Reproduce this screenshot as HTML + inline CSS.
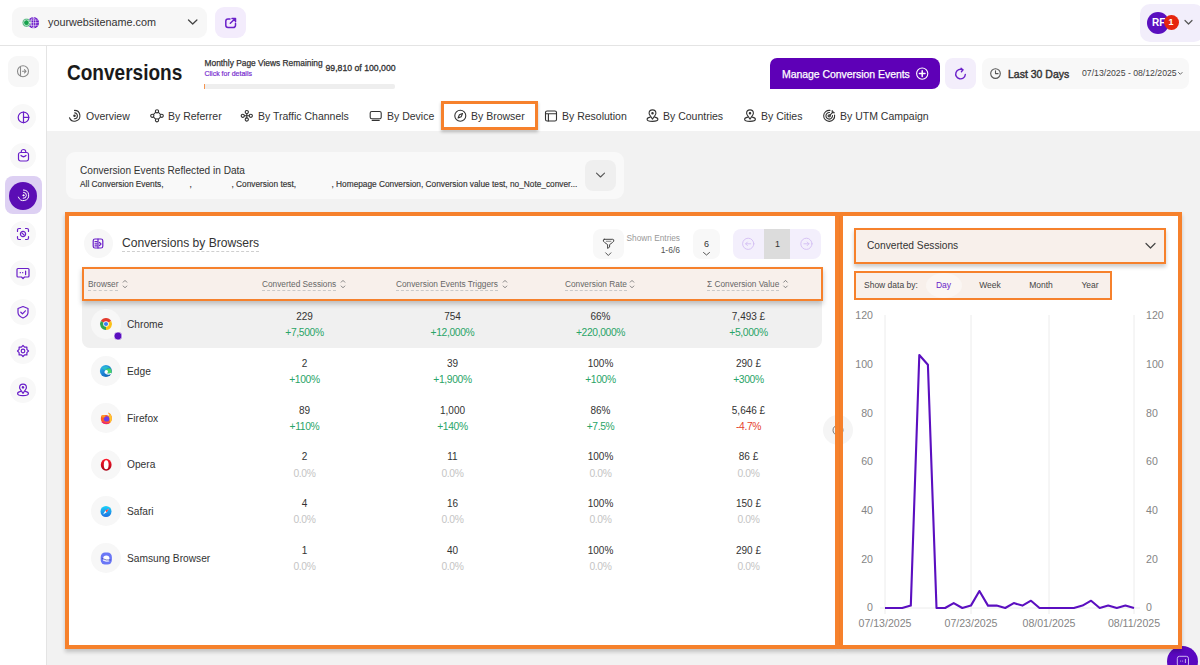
<!DOCTYPE html>
<html><head><meta charset="utf-8">
<style>
*{box-sizing:border-box;margin:0;padding:0}
html,body{width:1200px;height:665px;overflow:hidden;background:#f2f2f2;font-family:"Liberation Sans",sans-serif;color:#222}
.a{position:absolute}
.t{position:absolute;white-space:nowrap;line-height:1}
.c{transform:translateX(-50%)}
.r{transform:translateX(-100%)}
svg{position:absolute;overflow:visible}
#top{left:0;top:0;width:1200px;height:46px;background:#fff;border-bottom:1px solid #e4e4e4}
#side{left:0;top:46px;width:47px;height:619px;background:#fff;border-right:1px solid #e4e4e4}
#hdr{left:47px;top:46px;width:1153px;height:85px;background:#fff}
.sb{position:absolute;left:10px;width:26px;height:26px;border-radius:50%;background:#f7f7f7}
.tab{font-size:10.5px;color:#333;top:110.5px}
.th{font-size:8.3px;color:#666;top:280px;border-bottom:1px dashed #c9c9c9;padding-bottom:2px}
.num{font-size:10px;color:#333;margin-top:0.3px}
.chg{font-size:10.3px;color:#29a467;letter-spacing:-0.35px;margin-top:1px}
.zero{font-size:10.3px;color:#c4c4c4;letter-spacing:-0.35px;margin-top:1px}
.neg{font-size:10.3px;color:#e5432a;letter-spacing:-0.35px;margin-top:1px}
.bic{position:absolute;left:91px;width:30px;height:30px;border-radius:50%;background:#f7f7f7}
.bn{font-size:10.2px;color:#333;left:127px}
.ax{font-size:10.6px;color:#858585}
</style></head><body>
<div id="top" class="a"></div>
<div id="side" class="a"></div>
<div id="hdr" class="a"></div>
<!-- SIDEBAR -->
<div class="a" style="left:8px;top:56px;width:31px;height:31px;background:#f7f7f7;border-radius:9px"></div>
<div class="a" style="left:10px;top:104px;width:26px;height:26px;border-radius:50%;background:#f8f8f8"></div>
<div class="a" style="left:10px;top:143px;width:26px;height:26px;border-radius:50%;background:#f8f8f8"></div>
<div class="a" style="left:10px;top:221px;width:26px;height:26px;border-radius:50%;background:#f8f8f8"></div>
<div class="a" style="left:10px;top:260px;width:26px;height:26px;border-radius:50%;background:#f8f8f8"></div>
<div class="a" style="left:10px;top:299px;width:26px;height:26px;border-radius:50%;background:#f8f8f8"></div>
<div class="a" style="left:10px;top:338px;width:26px;height:26px;border-radius:50%;background:#f8f8f8"></div>
<div class="a" style="left:10px;top:377px;width:26px;height:26px;border-radius:50%;background:#f8f8f8"></div>
<div class="a" style="left:4.5px;top:176px;width:37px;height:38px;background:#ddd0f3;border-radius:8px"></div>
<div class="a" style="left:9px;top:181.5px;width:28px;height:28px;border-radius:50%;background:#5b0db5"></div>
<svg style="left:0;top:0" width="1200" height="665" fill="none" stroke-linecap="round" stroke-linejoin="round">
<g transform="translate(23,71.3)" stroke="#8a8a8a" stroke-width="1.1"><circle r="5.5"/><line x1="-2.5" y1="-4.5" x2="-2.5" y2="4.5"/><path d="M-0.5 0H3M1.5 -1.6L3 0L1.5 1.6"/></g>
<g transform="translate(23.5,117.4)" stroke="#6a1fc9" stroke-width="1.2"><circle r="5.3"/><line x1="0" y1="-5.3" x2="0" y2="5.3"/><line x1="0" y1="0" x2="5.3" y2="0"/></g>
<g transform="translate(23.5,156)" stroke="#6a1fc9" stroke-width="1.2"><rect x="-5" y="-3.5" width="10" height="8.5" rx="2"/><path d="M-2.2 -3.5V-4.5a2.2 2 0 0 1 4.4 0V-3.5"/><path d="M-2.5 -0.5Q0 2 2.5 -0.5"/></g>
<g transform="translate(23.4,195.3)" stroke="#fff" stroke-width="1"><path d="M0 -5.3A5.3 5.3 0 1 1 -5 1.8"/><path d="M0.2 -3A3 3 0 0 1 -0.2 3"/><circle r="0.6" fill="#fff"/></g>
<g transform="translate(23,234)" stroke="#6a1fc9" stroke-width="1.2"><path d="M-5.5 -2.5V-4a1.5 1.5 0 0 1 1.5 -1.5H-2.5M2.5 -5.5H4a1.5 1.5 0 0 1 1.5 1.5V-2.5M5.5 2.5V4a1.5 1.5 0 0 1 -1.5 1.5H2.5M-2.5 5.5H-4a1.5 1.5 0 0 1 -1.5 -1.5V2.5"/><circle r="2.6"/><line x1="-1.2" y1="-1.2" x2="1.2" y2="1.2"/></g>
<g transform="translate(23,273)" stroke="#6a1fc9" stroke-width="1.2"><path d="M-5 -4.5H5a1 1 0 0 1 1 1V3a1 1 0 0 1 -1 1H1.5L0 5.5L-1.5 4H-5a1 1 0 0 1 -1 -1V-3.5a1 1 0 0 1 1 -1Z"/><line x1="-2.8" y1="-0.3" x2="-2.6" y2="-0.3"/><line x1="-0.4" y1="-0.3" x2="-0.2" y2="-0.3"/><line x1="2.6" y1="-2" x2="2.6" y2="1.6"/></g>
<g transform="translate(23,312)" stroke="#6a1fc9" stroke-width="1.2"><path d="M0 -5.5L5 -3.5V0.5Q5 4 0 6Q-5 4 -5 0.5V-3.5Z"/><path d="M-2.2 0.2L-0.5 1.8L2.4 -1.2"/></g>
<g transform="translate(23,351)" stroke="#6a1fc9" stroke-width="1.2"><path d="M5.50 0.00L3.88 1.61L3.89 3.89L1.61 3.88L0.00 5.50L-1.61 3.88L-3.89 3.89L-3.88 1.61L-5.50 0.00L-3.88 -1.61L-3.89 -3.89L-1.61 -3.88L-0.00 -5.50L1.61 -3.88L3.89 -3.89L3.88 -1.61Z"/><circle r="1.8"/></g>
<g transform="translate(23,390)" stroke="#6a1fc9" stroke-width="1.2"><path d="M0 3.3L-2.6 -0.5Q-3.4 -1.6 -3.4 -2.5A3.4 3.4 0 0 1 3.4 -2.5Q3.4 -1.6 2.6 -0.5Z"/><circle cy="-2.6" r="0.7" fill="#6a1fc9"/><path d="M-2.3 1.3Q-5.4 2 -5.4 3.5Q-5.4 5.6 0 5.6Q5.4 5.6 5.4 3.5Q5.4 2 2.3 1.3"/></g>
</svg>

<!-- site selector -->
<div class="a" style="left:12px;top:7px;width:195px;height:31px;background:#f7f7f7;border-radius:9px"></div>
<div class="t" style="left:48px;top:17px;font-size:10.8px;color:#333">yourwebsitename.com</div>
<div class="a" style="left:215px;top:7px;width:31px;height:31px;background:#f3ecfc;border-radius:9px"></div>

<!-- avatar -->
<div class="a" style="left:1140px;top:4px;width:64px;height:38px;background:#f2eefb;border-radius:10px"></div>
<div class="a" style="left:1147px;top:12px;width:22px;height:22px;border-radius:50%;background:#5a0fbf"></div>
<div class="t" style="left:1152px;top:18px;font-size:10px;color:#fff;font-weight:bold">RF</div>
<div class="a" style="left:1164px;top:15px;width:15px;height:15px;border-radius:50%;background:#e6260f"></div>
<div class="t" style="left:1168.5px;top:18px;font-size:9px;color:#fff;font-weight:bold">1</div>

<!-- title -->
<div class="t" style="left:67px;top:62px;font-size:22px;font-weight:bold;color:#1a1a1a;transform:scaleX(0.865);transform-origin:0 0">Conversions</div>
<div class="t" style="left:204.5px;top:58.5px;font-size:8.4px;color:#333;-webkit-text-stroke:0.25px #333">Monthly Page Views Remaining</div>
<div class="t" style="left:204.5px;top:70px;font-size:7px;color:#7a2fd0;-webkit-text-stroke:0.2px #7a2fd0">Click for details</div>
<div class="t" style="left:325.5px;top:63.5px;font-size:8.7px;color:#333;-webkit-text-stroke:0.3px #333">99,810 of 100,000</div>
<div class="a" style="left:204px;top:84px;width:191px;height:5px;background:#eeeeee;border-radius:2px"></div>
<div class="a" style="left:204px;top:84px;width:1px;height:5px;background:#f6954f"></div>

<!-- manage button etc -->
<div class="a" style="left:770px;top:58px;width:170px;height:31px;background:#5e00b7;border-radius:7px 8px 8px 0"></div>
<div class="t" style="left:782px;top:68.5px;font-size:10.5px;color:#fff;-webkit-text-stroke:0.25px #fff;letter-spacing:-0.05px">Manage Conversion Events</div>
<div class="a" style="left:945px;top:58px;width:31px;height:31px;background:#f3eefb;border-radius:8px"></div>
<div class="a" style="left:982px;top:58px;width:207px;height:31px;background:#f8f8f8;border-radius:8px"></div>
<div class="t" style="left:1008px;top:68.5px;font-size:10.5px;color:#333;-webkit-text-stroke:0.4px #333">Last 30 Days</div>
<div class="t" style="left:1082px;top:69px;font-size:8.7px;color:#444">07/13/2025 - 08/12/2025</div>

<!-- TOP ICONS -->
<svg style="left:0;top:0" width="1200" height="665" fill="none" stroke-linecap="round" stroke-linejoin="round">
<g transform="translate(33.5,22.7)"><circle r="5.6" fill="#6a16c8"/><g stroke="#fff" stroke-width="0.6" opacity="0.9"><ellipse rx="2.3" ry="5.2"/><line x1="-5.2" y1="0" x2="5.2" y2="0"/><line x1="-4.6" y1="-2.6" x2="4.6" y2="-2.6"/><line x1="-4.6" y1="2.6" x2="4.6" y2="2.6"/><line x1="0" y1="-5.4" x2="0" y2="5.4"/></g></g>
<g transform="translate(26.5,22.7)"><circle r="4.2" fill="#27a35d" stroke="#fff" stroke-width="0.5"/><circle r="2.9" fill="none" stroke="#fff" stroke-width="0.7"/><circle r="1.9" fill="#15a34a"/></g>
<path d="M188.5 20L192.7 24L196.9 20" stroke="#444" stroke-width="1.3"/>
<g stroke="#6a1fc9" stroke-width="1.5"><path d="M230 19H228a2.2 2.2 0 0 0 -2.2 2.2V25.3a2.2 2.2 0 0 0 2.2 2.2H233.3a2.2 2.2 0 0 0 2.2 -2.2V23.5"/><path d="M230.3 23.3L235.3 18.5M232 18.4H235.5V21.8"/></g>
<path d="M1185 20.5L1188.5 24L1192 20.5" stroke="#555" stroke-width="1.2"/>
<g transform="translate(922.2,73.6)" stroke="#fff" stroke-width="1.1"><circle r="5.6"/><path d="M-2.8 0H2.8M0 -2.8V2.8" stroke-width="1.5"/></g>
<g transform="translate(960.5,74)" stroke="#6a1fc9" stroke-width="1.4"><path d="M2.2 -4.2A4.8 4.8 0 1 0 4.8 0.5"/><path d="M0.6 -5.8L2.6 -4.1L0.9 -2.2" stroke-width="1.3"/></g>
<g transform="translate(995.5,73.6)" stroke="#555" stroke-width="1.1"><circle r="4.8"/><path d="M0 -2.8V0H2.6"/></g>
<path d="M1178.5 72.5L1180.3 74.3L1182.1 72.5" stroke="#555" stroke-width="0.9"/>
</svg>
<!-- TAB ICONS -->
<svg style="left:0;top:0" width="1200" height="665" fill="none" stroke-linecap="round" stroke-linejoin="round">
<g transform="translate(74.5,115.8)" stroke="#333" stroke-width="1.1"><path d="M0 -5.4A5.4 5.4 0 1 1 -5 2"/><path d="M0.2 -2.9A2.9 2.9 0 0 1 -0.2 2.9"/><circle r="0.7" fill="#333"/></g>
<g transform="translate(157,115.8)" stroke="#333" stroke-width="1.1"><path d="M-1.4 -3.4L-3.4 -1.4M1.4 -3.4L3.4 -1.4M-1.4 3.4L-3.4 1.4M1.4 3.4L3.4 1.4"/><circle cy="-4.5" r="1.6"/><circle cy="4.5" r="1.6"/><circle cx="-4.7" r="1.6"/><circle cx="4.7" r="1.6"/></g>
<g transform="translate(246.8,115.8)" stroke="#333" stroke-width="1.1"><circle cy="-3.7" r="1.6"/><circle cy="3.7" r="1.6"/><circle cx="-4" r="1.6"/><circle cx="4" r="1.6"/><path d="M-2.4 0H2.4M0 -2.1V2.1"/></g>
<g transform="translate(375.7,115.8)" stroke="#333" stroke-width="1.1"><rect x="-5.5" y="-4.3" width="11" height="7.3" rx="1.6"/><path d="M-3.5 4.6H3.5"/></g>
<g transform="translate(460.3,115.8)" stroke="#333" stroke-width="1.1"><circle r="5.5"/><path d="M2.2 -2.2L-0.9 -1L-2.2 2.2L0.9 1Z"/></g>
<g transform="translate(551,116)" stroke="#333" stroke-width="1.1"><rect x="-5.5" y="-5" width="11" height="10" rx="1.6"/><path d="M-5.5 -2.3H5.5M-2.6 -2.3V5"/></g>
<g transform="translate(652.5,115.8)" stroke="#333" stroke-width="1.1"><path d="M0 3.3L-2.6 -0.5Q-3.4 -1.6 -3.4 -2.5A3.4 3.4 0 0 1 3.4 -2.5Q3.4 -1.6 2.6 -0.5Z"/><circle cy="-2.6" r="0.7" fill="#333"/><path d="M-2.3 1.3Q-5.4 2 -5.4 3.5Q-5.4 5.6 0 5.6Q5.4 5.6 5.4 3.5Q5.4 2 2.3 1.3"/></g>
<g transform="translate(750,115.8)" stroke="#333" stroke-width="1.1"><path d="M0 3.3L-2.6 -0.5Q-3.4 -1.6 -3.4 -2.5A3.4 3.4 0 0 1 3.4 -2.5Q3.4 -1.6 2.6 -0.5Z"/><circle cy="-2.6" r="0.7" fill="#333"/><path d="M-2.3 1.3Q-5.4 2 -5.4 3.5Q-5.4 5.6 0 5.6Q5.4 5.6 5.4 3.5Q5.4 2 2.3 1.3"/></g>
<g transform="translate(829.2,115.8)" stroke="#333" stroke-width="1.1"><path d="M5.4 -0.8A5.5 5.5 0 1 1 0.8 -5.4"/><path d="M3.3 -0.3A3.3 3.3 0 1 1 0.3 -3.3"/><circle r="1.1"/><path d="M0.5 -0.5L4 -4M3 -5.2V-3H5.2"/></g>
</svg>
<!-- tabs -->
<div class="t tab" style="left:86px">Overview</div>
<div class="t tab" style="left:168px">By Referrer</div>
<div class="t tab" style="left:258px">By Traffic Channels</div>
<div class="t tab" style="left:387px">By Device</div>
<div class="t tab" style="left:471px">By Browser</div>
<div class="t tab" style="left:562px">By Resolution</div>
<div class="t tab" style="left:663px">By Countries</div>
<div class="t tab" style="left:761px">By Cities</div>
<div class="t tab" style="left:840px">By UTM Campaign</div>
<div class="a" style="left:441px;top:101px;width:97px;height:29px;border:3px solid #f6812c;box-shadow:0 2px 3px rgba(0,0,0,.25)"></div>

<!-- events card -->
<div class="a" style="left:66px;top:152px;width:558px;height:47px;background:#f9f9f9;border-radius:9px"></div>
<div class="t" style="left:80px;top:165.5px;font-size:10.1px;color:#333">Conversion Events Reflected in Data</div>
<div class="t" style="left:80px;top:179.5px;font-size:8.3px;color:#333;-webkit-text-stroke:0.15px #333">All Conversion Events,</div><div class="t" style="left:189.5px;top:179.5px;font-size:8.3px;color:#333;-webkit-text-stroke:0.15px #333">,</div><div class="t" style="left:231.5px;top:179.5px;font-size:8.3px;color:#333;-webkit-text-stroke:0.15px #333">, Conversion test,</div><div class="t" style="left:331.5px;top:179.5px;font-size:8.3px;color:#333;-webkit-text-stroke:0.15px #333">, Homepage Conversion, Conversion value test, no_Note_conver...</div>
<div class="a" style="left:585px;top:160px;width:31px;height:31px;background:#efefef;border-radius:8px"></div>

<div class="a" style="left:1167px;top:646px;width:31px;height:31px;border-radius:50%;background:#5a08c0"></div><svg style="left:0;top:0" width="1200" height="665" fill="none"><g stroke="#d9c8f5" stroke-width="0.9"><rect x="1177.3" y="656.3" width="11.2" height="10" rx="2.2"/><path d="M1185.4 659V663"/></g><g fill="#c9b3f0"><circle cx="1180.6" cy="661" r="0.6"/><circle cx="1182.6" cy="661" r="0.6"/></g></svg>
<!-- left panel -->
<div class="a" style="left:65px;top:212px;width:774px;height:437px;background:#fff;border:4px solid #f6812c;box-shadow:0 3px 4px rgba(0,0,0,.2)"></div>
<!-- right panel -->
<div class="a" style="left:839px;top:212px;width:343px;height:437px;background:#fff;border:4px solid #f6812c;box-shadow:0 3px 4px rgba(0,0,0,.2)"></div>

<div class="a" style="left:823px;top:415px;width:30px;height:30px;border-radius:50%;background:#f5f5f5"></div><svg style="left:0;top:0" width="1200" height="665" fill="none"><circle cx="838" cy="430.2" r="5" stroke="#777" stroke-width="1"/></svg><div class="a" style="left:835px;top:212px;width:8px;height:437px;background:#f6812c"></div><div class="a" style="left:838.6px;top:216px;width:0.8px;height:429px;background:#e8792a;opacity:0.5"></div>
<!-- LEFT PANEL CONTENT -->
<div class="a" style="left:84px;top:229px;width:29px;height:29px;border-radius:50%;background:#f7f7f7"></div>
<div class="t" style="left:122px;top:237px;font-size:12.1px;color:#333;border-bottom:1px dashed #cfcfcf;padding-bottom:2px">Conversions by Browsers</div>
<div class="a" style="left:593px;top:229px;width:31px;height:30px;background:#f8f8f8;border-radius:8px"></div>
<div class="t r" style="left:680px;top:234px;font-size:8.3px;color:#999">Shown Entries</div>
<div class="t r" style="left:680px;top:246px;font-size:8.5px;color:#555">1-6/6</div>
<div class="a" style="left:693px;top:229px;width:27px;height:30px;background:#f8f8f8;border-radius:8px"></div>
<div class="t c" style="left:706.5px;top:239.5px;font-size:9px;color:#333">6</div>
<div class="a" style="left:733px;top:229px;width:88px;height:30px;background:#f3effc;border-radius:8px;overflow:hidden"><div class="a" style="left:31px;top:0;width:26px;height:30px;background:#dcdcdc"></div></div>
<div class="t c" style="left:777.5px;top:239.5px;font-size:9px;color:#333">1</div>






<div class="a" style="left:82px;top:300px;width:740px;height:48px;background:#f0f0f0;border-radius:0 0 8px 8px"></div><div class="a" style="left:82px;top:267px;width:741px;height:34px;background:#f8f0eb;border:2px solid #f6812c;box-shadow:0 3px 5px rgba(0,0,0,.22)"></div><div class="t th" style="left:88px">Browser</div><div class="t th" style="left:262px">Converted Sessions</div><div class="t th" style="left:396px">Conversion Events Triggers</div><div class="t th" style="left:565px">Conversion Rate</div><div class="t th" style="left:707px">Σ Conversion Value</div>
<div class="bic" style="top:309.2px"></div>
<div class="t bn" style="top:320.0px">Chrome</div>
<div class="t c num" style="left:304.5px;top:311.7px">229</div>
<div class="t c chg" style="left:304.5px;top:327.2px">+7,500%</div>
<div class="t c num" style="left:452.5px;top:311.7px">754</div>
<div class="t c chg" style="left:452.5px;top:327.2px">+12,000%</div>
<div class="t c num" style="left:600.5px;top:311.7px">66%</div>
<div class="t c chg" style="left:600.5px;top:327.2px">+220,000%</div>
<div class="t c num" style="left:748.5px;top:311.7px">7,493 £</div>
<div class="t c chg" style="left:748.5px;top:327.2px">+5,000%</div>
<div class="bic" style="top:356.0px"></div>
<div class="t bn" style="top:366.8px">Edge</div>
<div class="t c num" style="left:304.5px;top:358.5px">2</div>
<div class="t c chg" style="left:304.5px;top:374.0px">+100%</div>
<div class="t c num" style="left:452.5px;top:358.5px">39</div>
<div class="t c chg" style="left:452.5px;top:374.0px">+1,900%</div>
<div class="t c num" style="left:600.5px;top:358.5px">100%</div>
<div class="t c chg" style="left:600.5px;top:374.0px">+100%</div>
<div class="t c num" style="left:748.5px;top:358.5px">290 £</div>
<div class="t c chg" style="left:748.5px;top:374.0px">+300%</div>
<div class="bic" style="top:402.8px"></div>
<div class="t bn" style="top:413.6px">Firefox</div>
<div class="t c num" style="left:304.5px;top:405.3px">89</div>
<div class="t c chg" style="left:304.5px;top:420.8px">+110%</div>
<div class="t c num" style="left:452.5px;top:405.3px">1,000</div>
<div class="t c chg" style="left:452.5px;top:420.8px">+140%</div>
<div class="t c num" style="left:600.5px;top:405.3px">86%</div>
<div class="t c chg" style="left:600.5px;top:420.8px">+7.5%</div>
<div class="t c num" style="left:748.5px;top:405.3px">5,646 £</div>
<div class="t c neg" style="left:748.5px;top:420.8px">-4.7%</div>
<div class="bic" style="top:449.6px"></div>
<div class="t bn" style="top:460.4px">Opera</div>
<div class="t c num" style="left:304.5px;top:452.1px">2</div>
<div class="t c zero" style="left:304.5px;top:467.6px">0.0%</div>
<div class="t c num" style="left:452.5px;top:452.1px">11</div>
<div class="t c zero" style="left:452.5px;top:467.6px">0.0%</div>
<div class="t c num" style="left:600.5px;top:452.1px">100%</div>
<div class="t c zero" style="left:600.5px;top:467.6px">0.0%</div>
<div class="t c num" style="left:748.5px;top:452.1px">86 £</div>
<div class="t c zero" style="left:748.5px;top:467.6px">0.0%</div>
<div class="bic" style="top:496.4px"></div>
<div class="t bn" style="top:507.2px">Safari</div>
<div class="t c num" style="left:304.5px;top:498.9px">4</div>
<div class="t c zero" style="left:304.5px;top:514.4px">0.0%</div>
<div class="t c num" style="left:452.5px;top:498.9px">16</div>
<div class="t c zero" style="left:452.5px;top:514.4px">0.0%</div>
<div class="t c num" style="left:600.5px;top:498.9px">100%</div>
<div class="t c zero" style="left:600.5px;top:514.4px">0.0%</div>
<div class="t c num" style="left:748.5px;top:498.9px">150 £</div>
<div class="t c zero" style="left:748.5px;top:514.4px">0.0%</div>
<div class="bic" style="top:543.2px"></div>
<div class="t bn" style="top:554.0px">Samsung Browser</div>
<div class="t c num" style="left:304.5px;top:545.7px">1</div>
<div class="t c zero" style="left:304.5px;top:561.2px">0.0%</div>
<div class="t c num" style="left:452.5px;top:545.7px">40</div>
<div class="t c zero" style="left:452.5px;top:561.2px">0.0%</div>
<div class="t c num" style="left:600.5px;top:545.7px">100%</div>
<div class="t c zero" style="left:600.5px;top:561.2px">0.0%</div>
<div class="t c num" style="left:748.5px;top:545.7px">290 £</div>
<div class="t c zero" style="left:748.5px;top:561.2px">0.0%</div>

<!-- BROWSER + MISC ICONS -->
<svg style="left:0;top:0" width="1200" height="665" fill="none" stroke-linecap="round" stroke-linejoin="round">
<g transform="translate(98,243.5)" stroke="#6a1fc9" stroke-width="1.2"><rect x="-4.8" y="-4.5" width="9.6" height="9" rx="1.8"/><path d="M0 -4.5V4.5M-3 -1.8H-1.2M-3 0.3H-1.2M-3 2.4H-1.2M1.5 -1L3 0.5L1.5 2"/></g>
<path d="M106 324L100.80 321.00A6 6 0 0 1 111.20 321.00Z" fill="#e33b2e"/>
<path d="M106 324L111.20 321.00A6 6 0 0 1 106.00 330.00Z" fill="#fbc117"/>
<path d="M106 324L106.00 330.00A6 6 0 0 1 100.80 321.00Z" fill="#2ea44f"/>
<circle cx="106" cy="324" r="2.8" fill="#fff"/><circle cx="106" cy="324" r="2.1" fill="#3b7ff0"/>
<circle cx="118" cy="336" r="4" fill="#5a0fbf" stroke="#fff" stroke-width="0.6"/>
<defs><linearGradient id="eg" x1="0" y1="0" x2="1" y2="1"><stop offset="0" stop-color="#35c1f1"/><stop offset="0.5" stop-color="#1b7fd3"/><stop offset="1" stop-color="#0c59a4"/></linearGradient><radialGradient id="fg" cx="0.4" cy="0.6" r="0.7"><stop offset="0" stop-color="#7b3fe0"/><stop offset="0.45" stop-color="#b8307a"/><stop offset="0.7" stop-color="#f04f36"/><stop offset="1" stop-color="#ffb52b"/></radialGradient><linearGradient id="og" x1="0" y1="0" x2="0" y2="1"><stop offset="0" stop-color="#ff1b2d"/><stop offset="1" stop-color="#a70014"/></linearGradient><linearGradient id="sg" x1="0" y1="0" x2="0" y2="1"><stop offset="0" stop-color="#19d3fa"/><stop offset="1" stop-color="#1e6fe0"/></linearGradient></defs>
<g transform="translate(105.9,371)"><circle r="6" fill="url(#eg)"/><path d="M-0.8 -0.6Q1.5 -3.5 4.8 -2.5Q6.3 0 5.6 2.2Q3.8 3.4 2.2 2.6Q0.6 1.8 -0.8 -0.6Z" fill="#45d46a"/><path d="M-4.2 -2.8Q-0.5 -6.6 4.6 -3.2Q1.5 -4.2 -0.8 -0.6Z" fill="#2bc3c9" opacity="0.8"/><ellipse cx="0.4" cy="0.6" rx="1.7" ry="1.6" fill="#fff"/><path d="M-0.9 1.6Q1.5 4.2 5 2.5" stroke="#fff" stroke-width="1.1" fill="none"/></g>
<g transform="translate(106,418.3)"><path d="M-4.6 -2.6Q-6.4 2.5 -2.8 5.2Q1 7 4.2 4.4Q6.6 2 5.6 -2Q5 -4.5 2.2 -5.8Q3.6 -3.5 2.6 -2.4Q1 -4 -1.8 -3Z" fill="#ff5a2a"/><path d="M2.2 -5.8Q5 -4.5 5.6 -2Q6.6 2 4.2 4.4Q3.5 1 2.6 -2.4Q3.6 -3.5 2.2 -5.8Z" fill="#ffc42e"/><path d="M-4.6 4Q0 7.2 4.2 4.4Q0.5 5.6 -2.8 3.2Z" fill="#e8237b"/><circle cx="0.6" cy="0.6" r="2.7" fill="#6b3ee8"/><path d="M-4.6 -2.6Q-3.5 -4 -1.8 -3Q-0.5 -2.4 -0.6 -1.2L-3.4 -0.6Z" fill="#ff9b22"/></g>
<g transform="translate(106.2,464.8)"><ellipse rx="5.4" ry="6" fill="url(#og)"/><ellipse rx="2.4" ry="4.5" fill="#fff"/></g>
<g transform="translate(106,511.5)"><circle r="5.5" fill="url(#sg)"/><path d="M3 -3L0.7 0.7L-3 3L-0.7 -0.7Z" fill="#fff"/><path d="M3 -3L0.7 0.7L-0.7 -0.7Z" fill="#f33"/></g>
<g transform="translate(106.3,558.5)"><rect x="-5.6" y="-5.9" width="11.2" height="11.8" rx="4.3" fill="#6a77f6"/><ellipse cx="0" cy="-0.3" rx="3.1" ry="2.6" fill="#fff"/><path d="M-4.2 0Q0 2.2 4.2 1.6" stroke="#3a3fa8" stroke-width="0.7" fill="none"/><path d="M-3 1.8Q0 3.6 2.6 2.6" stroke="#fff" stroke-width="0.9" fill="none"/></g>
<g stroke="#333" stroke-width="0.9"><path d="M604.2 239.3H612.8Q614.3 239.5 613.7 241.2Q613 242.4 609.6 244.6V247.1L607.6 248.4V244.6Q604.2 242.4 603.4 241.2Q602.8 239.5 604.2 239.3Z"/><path d="M606.3 241.3H610.9" stroke="#777"/></g>
<path d="M605.7 252.8L608.3 255.5L610.9 252.8" stroke="#444" stroke-width="0.9"/>
<path d="M703.5 252.5L706.5 255L709.5 252.5" stroke="#444" stroke-width="0.9"/>
<g transform="translate(748.2,243.8)" stroke="#d2bdf3" stroke-width="0.9"><circle r="5.6"/><path d="M2.5 0H-2.5M-0.8 -1.8L-2.5 0L-0.8 1.8"/></g>
<g transform="translate(806.4,243.8)" stroke="#d2bdf3" stroke-width="0.9"><circle r="5.6"/><path d="M-2.5 0H2.5M0.8 -1.8L2.5 0L0.8 1.8"/></g>
<path d="M596.5 173.2L600.5 177L604.5 173.2" stroke="#555" stroke-width="1.1"/>

<path d="M123.2 282.2L125 280.4L126.8 282.2M123.2 286L125 287.8L126.8 286" stroke="#777" stroke-width="0.9"/>
<path d="M341.2 282.2L343 280.4L344.8 282.2M341.2 286L343 287.8L344.8 286" stroke="#777" stroke-width="0.9"/>
<path d="M503.2 282.2L505 280.4L506.8 282.2M503.2 286L505 287.8L506.8 286" stroke="#777" stroke-width="0.9"/>
<path d="M630.2 282.2L632 280.4L633.8 282.2M630.2 286L632 287.8L633.8 286" stroke="#777" stroke-width="0.9"/>
<path d="M783.7 282.2L785.5 280.4L787.3 282.2M783.7 286L785.5 287.8L787.3 286" stroke="#777" stroke-width="0.9"/>
</svg>
<!-- RIGHT PANEL CONTENT -->
<div class="a" style="left:854px;top:228px;width:312px;height:36px;background:#f8f0eb;border:2px solid #f6812c;box-shadow:0 3px 4px rgba(0,0,0,.2)"></div>
<div class="t" style="left:867px;top:241px;font-size:10.2px;color:#333">Converted Sessions</div>
<div class="a" style="left:854px;top:271px;width:258px;height:29px;background:#f8f0eb;border:2px solid #f6812c"></div>
<div class="t" style="left:864px;top:281px;font-size:8.5px;color:#444">Show data by:</div>
<div class="a" style="left:926px;top:273px;width:36px;height:25px;border-radius:50%;background:#fbf6f3"></div>
<div class="t c" style="left:943.5px;top:281px;font-size:8.5px;color:#6a1fc9">Day</div>
<div class="t c" style="left:990px;top:281px;font-size:8.5px;color:#444">Week</div>
<div class="t c" style="left:1041px;top:281px;font-size:8.5px;color:#444">Month</div>
<div class="t c" style="left:1090px;top:281px;font-size:8.5px;color:#444">Year</div>
<svg style="left:0;top:0" width="1200" height="665">
<line x1="885" y1="315" x2="885" y2="614" stroke="#ececec" stroke-width="1"/>
<line x1="971" y1="315" x2="971" y2="614" stroke="#ececec" stroke-width="1"/>
<line x1="1049" y1="315" x2="1049" y2="614" stroke="#ececec" stroke-width="1"/>
<line x1="1134" y1="315" x2="1134" y2="614" stroke="#ececec" stroke-width="1"/>
<line x1="880" y1="608" x2="1140" y2="608" stroke="#ececec" stroke-width="1"/>
<polyline points="885.0,608.0 893.6,608.0 902.2,608.0 910.8,605.6 919.3,355.0 927.9,364.7 936.5,608.0 945.1,608.0 953.7,603.1 962.3,608.0 970.9,605.6 979.4,591.0 988.0,605.6 996.6,605.6 1005.2,608.0 1013.8,603.1 1022.4,605.6 1031.0,600.7 1039.5,608.0 1048.1,608.0 1056.7,608.0 1065.3,608.0 1073.9,608.0 1082.5,605.6 1091.1,600.7 1099.7,608.0 1108.2,605.6 1116.8,608.0 1125.4,605.6 1134.0,608.0" fill="none" stroke="#5b0fc0" stroke-width="2.1" stroke-linejoin="round"/>
</svg>
<div class="t ax r" style="left:873px;top:310.4px">120</div>
<div class="t ax" style="left:1146px;top:310.4px">120</div>
<div class="t ax r" style="left:873px;top:359.1px">100</div>
<div class="t ax" style="left:1146px;top:359.1px">100</div>
<div class="t ax r" style="left:873px;top:407.7px">80</div>
<div class="t ax" style="left:1146px;top:407.7px">80</div>
<div class="t ax r" style="left:873px;top:456.4px">60</div>
<div class="t ax" style="left:1146px;top:456.4px">60</div>
<div class="t ax r" style="left:873px;top:505.1px">40</div>
<div class="t ax" style="left:1146px;top:505.1px">40</div>
<div class="t ax r" style="left:873px;top:553.8px">20</div>
<div class="t ax" style="left:1146px;top:553.8px">20</div>
<div class="t ax r" style="left:873px;top:602.4px">0</div>
<div class="t ax" style="left:1146px;top:602.4px">0</div>
<div class="t ax c" style="left:885px;top:618px">07/13/2025</div>
<div class="t ax c" style="left:971px;top:618px">07/23/2025</div>
<div class="t ax c" style="left:1049px;top:618px">08/01/2025</div>
<div class="t ax c" style="left:1134px;top:618px">08/11/2025</div>

<svg style="left:0;top:0" width="1200" height="665" fill="none" stroke-linecap="round" stroke-linejoin="round"><path d="M1146 243.5L1150.5 248L1155 243.5" stroke="#444" stroke-width="1.2"/></svg>
</body></html>
